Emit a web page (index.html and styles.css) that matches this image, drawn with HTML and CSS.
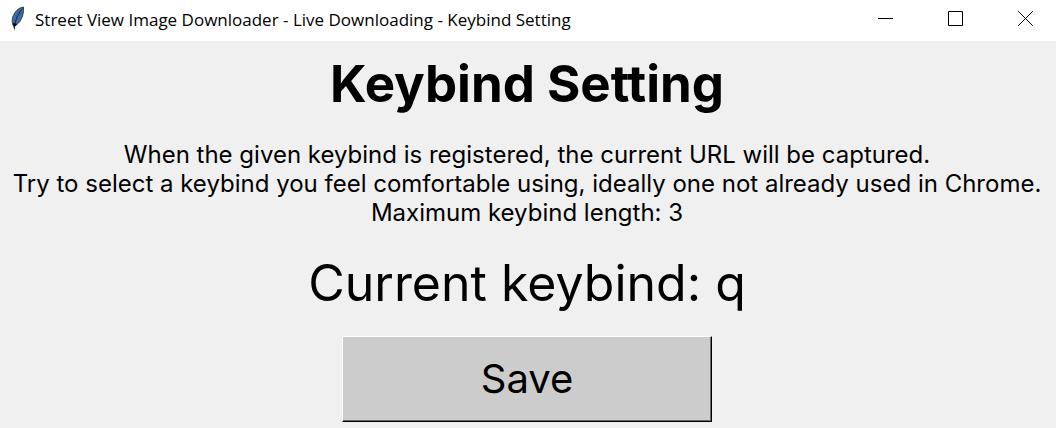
FILE: index.html
```html
<!DOCTYPE html>
<html lang="en">
<head>
<meta charset="utf-8">
<title>Keybind Setting</title>
<link rel="stylesheet" href="styles.css">
</head>
<body>
<header class="titlebar">
  <svg class="app-icon" viewBox="0 0 16 26" aria-hidden="true">
    <path d="M4 19.500C2.500 15 3 11 6 6.500 8 3.500 11 1.500 14.500 1c.3 5-.5 9-2.500 12.500-1.500 3-3.500 5-6.500 6.500z" fill="#3a6aa8" stroke="#444" stroke-width="1"/>
    <path d="M5.500 19.500C7 12 9.500 7 13.500 2.500" fill="none" stroke="#16263c" stroke-width="1"/>
    <path d="M4 17l4 1-2 2.500-.5 4-1-4z" fill="#000"/>
  </svg>
  <span class="window-title">Street View Image Downloader - Live Downloading - Keybind Setting</span>
  <div class="controls">
    <button class="control" aria-label="Minimize"><svg viewBox="0 0 15 15"><path d="M0 7.500h15"/></svg></button>
    <button class="control" aria-label="Maximize"><svg viewBox="0 0 15 15"><path d="M.5 .5h14v14h-14z"/></svg></button>
    <button class="control" aria-label="Close"><svg viewBox="0 0 15 15"><path d="M.2 .2l14.600 14.600M14.800 .2L.2 14.800"/></svg></button>
  </div>
</header>
<main class="content">
  <h1 class="heading">Keybind Setting</h1>
  <p class="description">When the given keybind is registered, the current URL will be captured.<br>Try to select a keybind you feel comfortable using, ideally one not already used in Chrome.<br>Maximum keybind length: 3</p>
  <p class="current">Current keybind: q</p>
  <button class="save">Save</button>
</main>
</body>
</html>
```
FILE: styles.css
```css
* { box-sizing: border-box; }
body { margin: 0; min-height: 100vh; background: #f0f0f0; color: #000; font-family: Inter, sans-serif; }
.titlebar { display: flex; align-items: center; height: 41px; padding: 0 0 4px 9px; background: #fff; }
.app-icon { width: 16px; height: 26px; }
.window-title { margin-left: 10px; padding-top: 2px; font-family: "Open Sans", sans-serif; font-size: 17px; line-height: 24px; white-space: nowrap; }
.controls { display: flex; margin-left: auto; align-self: stretch; }
.control { display: flex; align-items: center; justify-content: flex-end; width: 70px; padding: 0 23px 0 0; border: 0; background: none; }
.control svg { width: 15px; height: 15px; fill: none; stroke: #000; stroke-width: 1; }
.content { display: flex; flex-direction: column; align-items: center; padding: 13px 2px 6px 0; text-align: center; }
.heading { margin: 0; font-size: 51px; line-height: 60px; font-weight: 700; }
.description { margin: 26px 0 0; font-size: 24px; line-height: 29px; white-space: nowrap; }
.current { margin: 26px 0 0; font-size: 50px; line-height: 60px; }
.save { width: 370px; max-width: 100%; margin-top: 23px; padding: 19px 0; border: 1px solid; border-color: #fff #000 #000 #fff; background: #ccc; box-shadow: inset -1px -1px #696969; color: #000; font: 40px/46px Inter, sans-serif; }
```
